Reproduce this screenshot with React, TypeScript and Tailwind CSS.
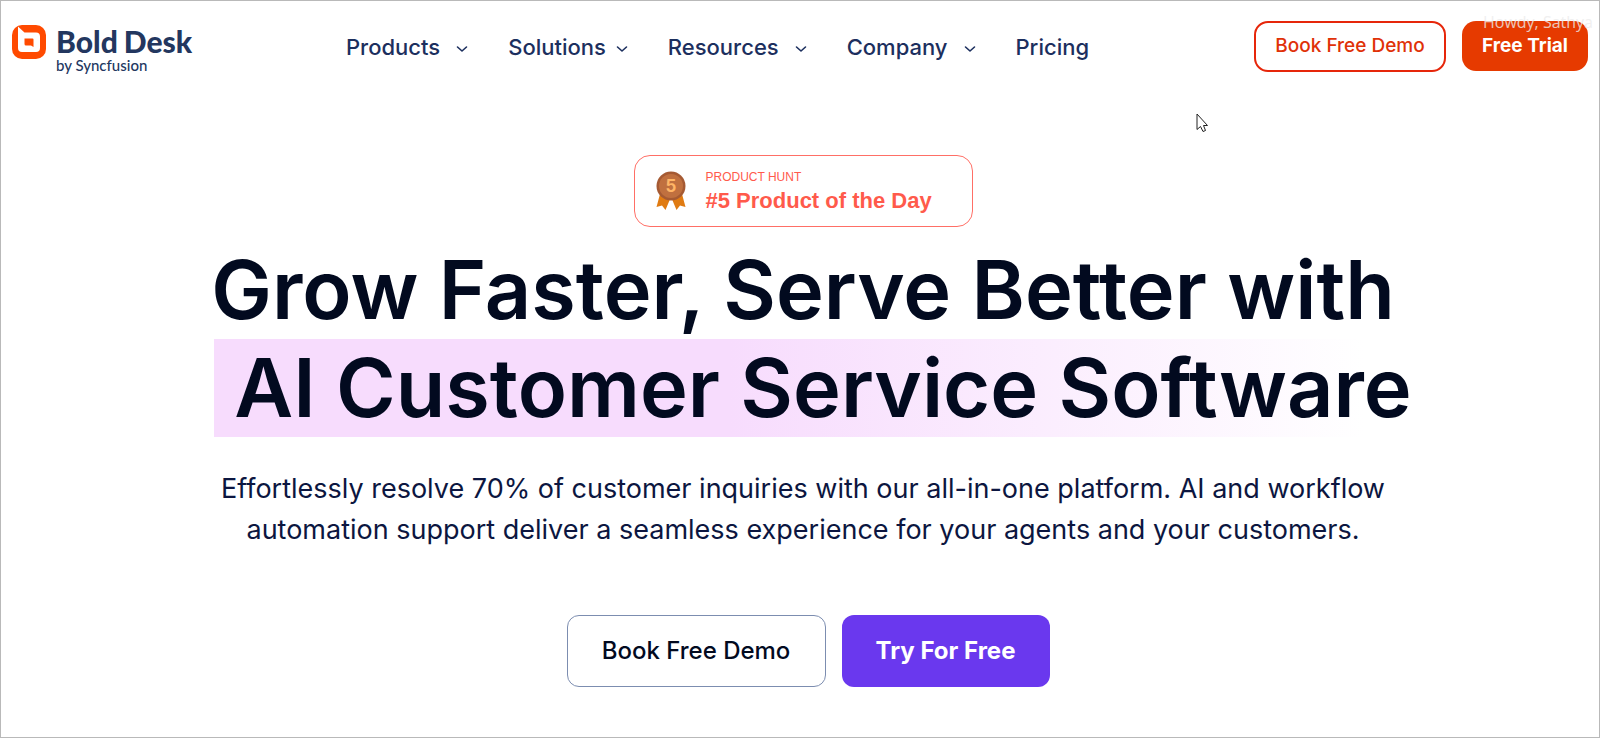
import React from "react";

const navItems = [
  { label: "Products", menu: true, gap: "gap-4" },
  { label: "Solutions", menu: true, gap: "gap-2.5" },
  { label: "Resources", menu: true, gap: "gap-4" },
  { label: "Company", menu: true, gap: "gap-4" },
  { label: "Pricing", menu: false, gap: "gap-4" },
];

function LogoMark() {
  return (
    <svg viewBox="0 0 34 34" className="size-[34px] shrink-0" aria-hidden="true">
      <rect x="0" y="0" width="34" height="34" rx="10" fill="#ff4a00" />
      <path d="M6 1.5 L12.5 7.5 H24 Q28 7.500 28 11.500 V23 Q28 27 24 27 H10 Q6 27 6 23 Z" fill="#fff" />
      <path d="M12.500 13.500 H20.500 Q21.500 13.500 21.500 14.500 V22 L19 20.500 H14 Q12.500 20.500 12.500 19 Z" fill="#ff4a00" />
    </svg>
  );
}

function Chevron() {
  return (
    <svg viewBox="0 0 12 8" className="mt-1 h-2 w-3" fill="none" stroke="#1c2f5e" strokeWidth="1.6" strokeLinecap="round" strokeLinejoin="round" aria-hidden="true">
      <path d="M1.5 2 L6 6 L10.5 2" />
    </svg>
  );
}

function Medal() {
  return (
    <svg viewBox="0 0 30 40" className="h-10 w-[30px] shrink-0" aria-hidden="true">
      <path d="M4 23 L0.500 36 L6 34.500 L9.500 39 L14.500 27 Z" fill="#e07b12" />
      <path d="M26 23 L29.500 36 L24 34.500 L20.500 39 L15.500 27 Z" fill="#e07b12" />
      <circle cx="15" cy="15" r="14.500" fill="#a55a33" />
      <circle cx="15" cy="15" r="12" fill="#c0703f" />
      <text x="15" y="21" textAnchor="middle" fontFamily="Inter, sans-serif" fontWeight="700" fontSize="17" fill="#ffb566">5</text>
    </svg>
  );
}

export default function App() {
  return (
    <div className="relative min-h-screen overflow-hidden border border-[#b9b9b9] bg-white font-['Inter',sans-serif]">
      <header className="flex items-start px-[11px] pt-5">
        <a href="#home" className="mt-1 flex w-[182px] shrink-0 gap-[10px]" aria-label="BoldDesk by Syncfusion">
          <LogoMark />
          <span className="flex flex-col font-['Lato',sans-serif] text-[#23375f]">
            <span className="flex gap-1.5 text-[30px] font-black leading-8">
              <span>Bold</span>
              <span>Desk</span>
            </span>
            <span className="text-[15px] font-medium leading-4">by Syncfusion</span>
          </span>
        </a>
        <nav className="ml-[152px] mt-3 flex gap-10">
          {navItems.map((item) => (
            <a key={item.label} href={"#" + item.label.toLowerCase()} className={"flex items-center text-[22px] font-medium leading-7 text-[#1c2f5e] " + item.gap}>
              {item.label}
              {item.menu && <Chevron />}
            </a>
          ))}
        </nav>
        <div className="ml-auto flex gap-4">
          <button className="h-[51px] w-[192px] rounded-[14px] border-2 border-[#e6260a] text-[19px] font-medium text-[#e03108]">Book Free Demo</button>
          <button className="h-[50px] w-[126px] rounded-[14px] bg-[#e63a00] text-[19px] font-bold text-white">Free Trial</button>
        </div>
      </header>
      <span className="absolute right-[6px] top-[9px] font-['Open_Sans',sans-serif] text-base leading-6 text-[#ececec]/80">Howdy, Sathya</span>
      <svg viewBox="0 0 12 20" className="absolute left-[1195px] top-[112px] h-5 w-3" aria-hidden="true">
        <path d="M1 1 V16.500 L4.500 13.500 L7 18.500 L9.500 17.500 L7.500 12.500 H11.500 Z" fill="#fff" stroke="#222" strokeWidth="1" />
      </svg>

      <main className="flex flex-col items-center pl-1.5 pt-[82px]">
        <a href="#product-hunt" className="flex h-[72px] w-[339px] items-center gap-5 rounded-2xl border border-[#ff6f66] pl-[21px] text-[#ff5a4b]">
          <Medal />
          <span className="flex flex-col font-['Liberation_Sans',sans-serif]">
            <span className="text-xs leading-5">PRODUCT HUNT</span>
            <span className="text-[22px] font-bold leading-7">#5 Product of the Day</span>
          </span>
        </a>
        <h1 className="mt-3.5 flex flex-col items-center whitespace-nowrap text-[81px] font-semibold leading-[98px] text-[#020a1f]">
          <span>Grow Faster, Serve Better with</span>
          <span className="ml-5 bg-[linear-gradient(90deg,#f7dcfd_43%,#ffffff_96%)] pl-5">AI Customer Service Software</span>
        </h1>
        <p className="mt-[31px] text-center text-[27px] leading-[41px] text-[#0c1640]">
          Effortlessly resolve 70% of customer inquiries with our all-in-one platform. AI and workflow
          <br />
          automation support deliver a seamless experience for your agents and your customers.
        </p>
        <div className="ml-2.5 mt-[65px] flex gap-4">
          <button className="h-[72px] w-[259px] rounded-xl border border-[#7c8db0] text-2xl font-medium text-[#020a1f]">Book Free Demo</button>
          <button className="h-[72px] w-[208px] rounded-xl bg-[#6a38ee] text-2xl font-bold text-white">Try For Free</button>
        </div>
      </main>
    </div>
  );
}
